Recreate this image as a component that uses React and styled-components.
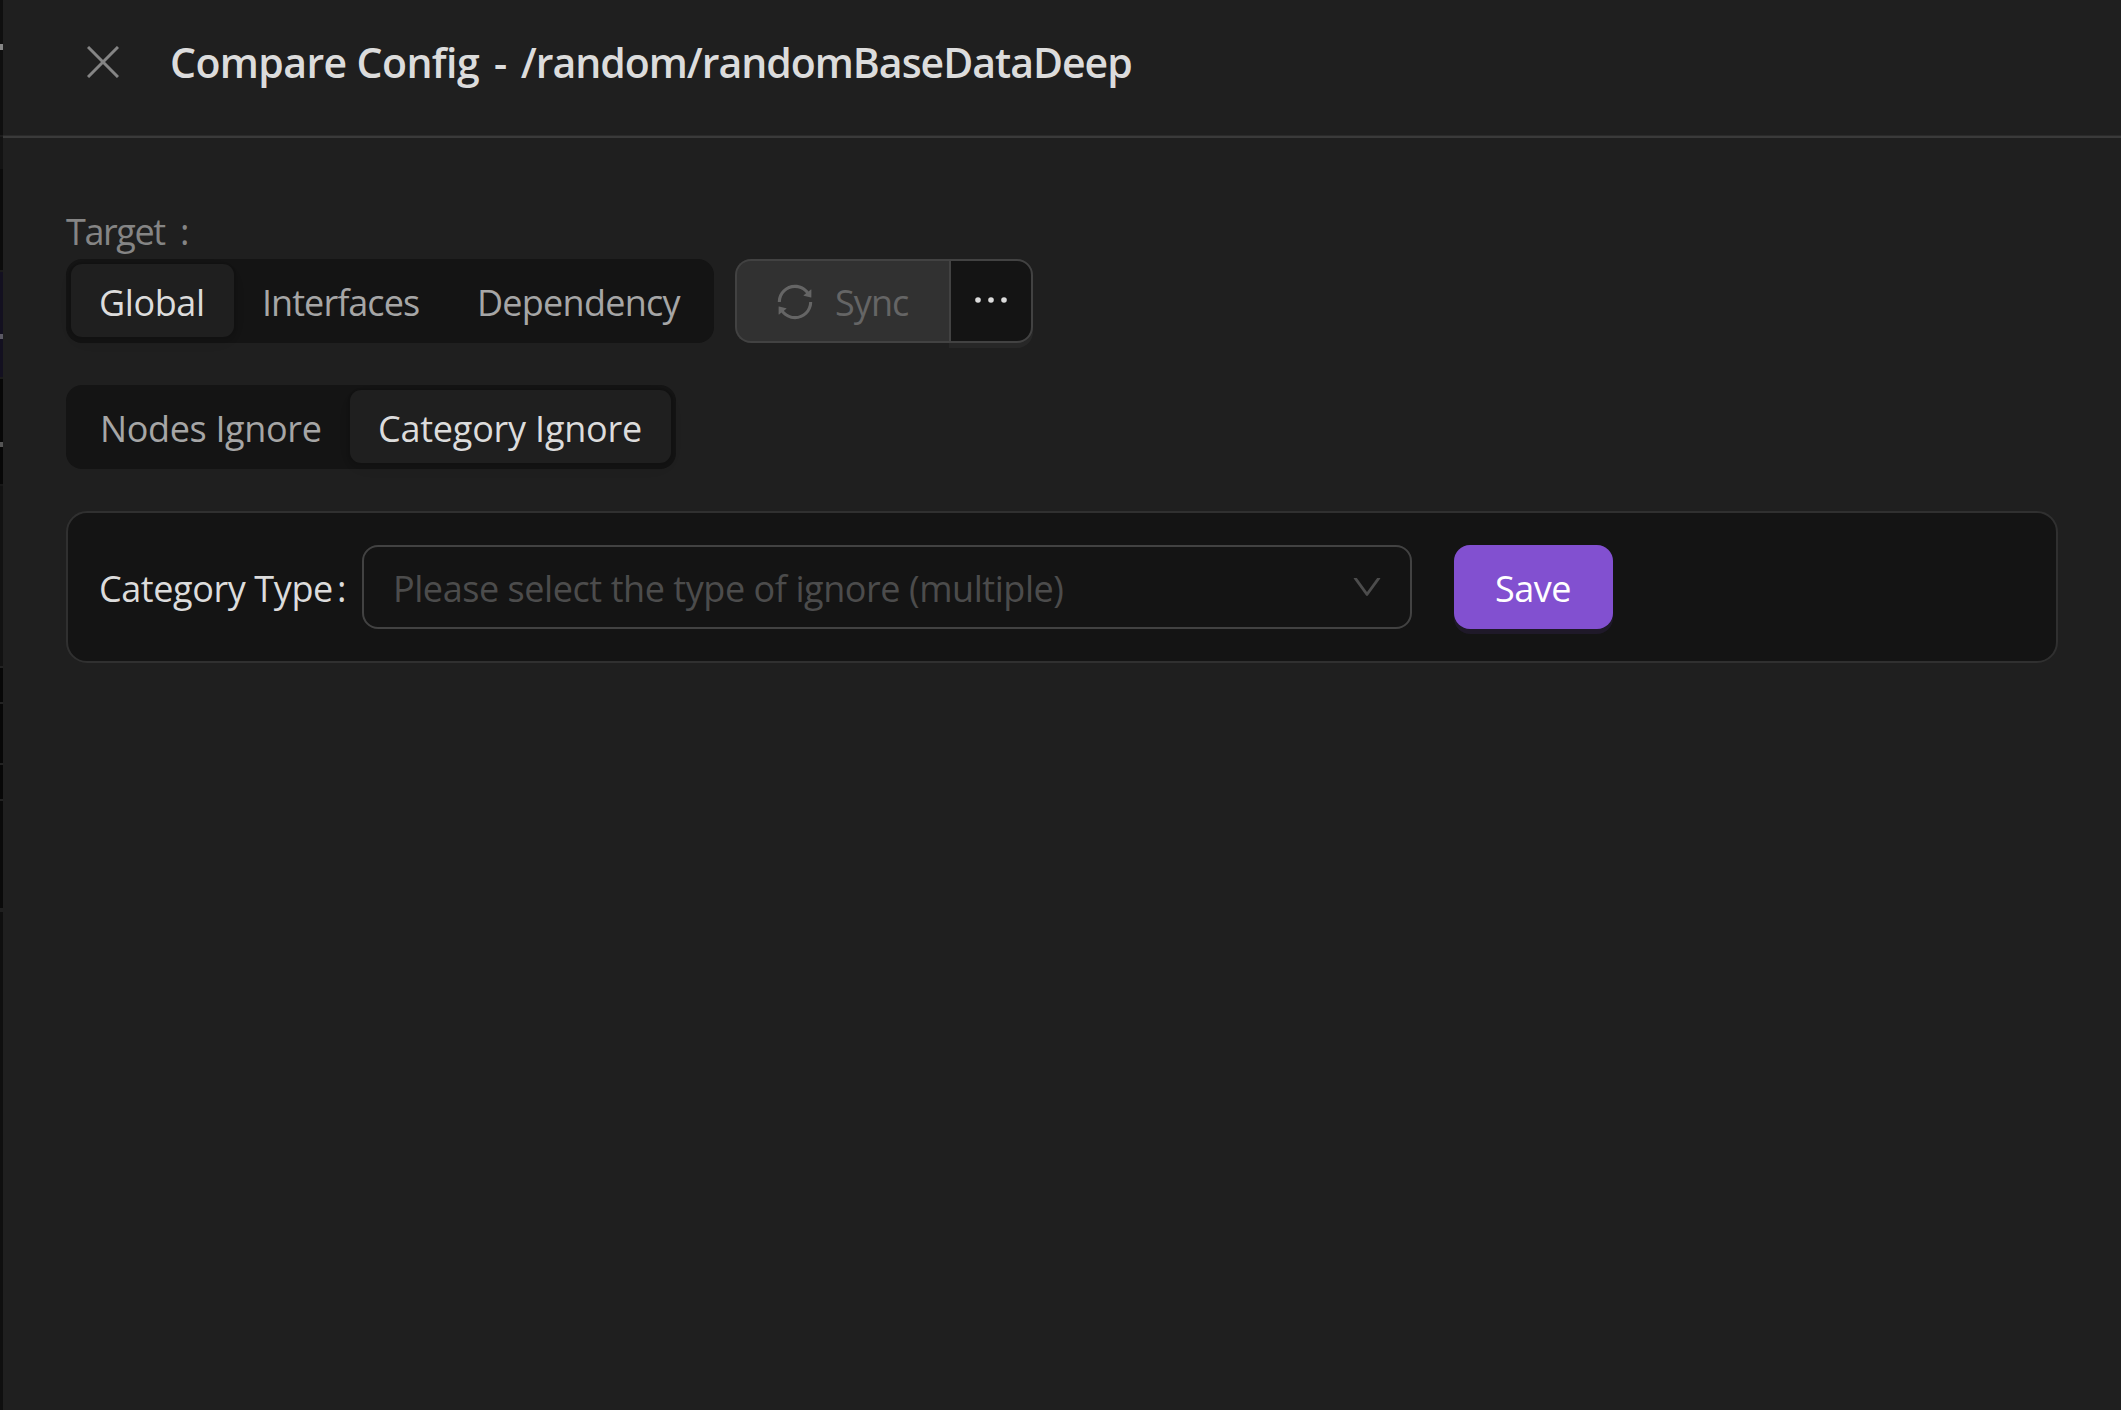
import React from 'react';
import styled, { createGlobalStyle } from 'styled-components';
import { AiOutlineSync, AiOutlineDown } from 'react-icons/ai';

const GlobalStyle = createGlobalStyle`
  *, *::before, *::after { box-sizing: border-box; }
  body {
    margin: 0;
    background: #1f1f1f;
    color: #dcdcdc;
    font-family: 'Open Sans', 'Noto Sans', sans-serif;
    font-size: 36px;
  }
  button { font: inherit; color: inherit; margin: 0; }
`;

const Page = styled.div`
  display: flex;
  height: 1410px;
  overflow: hidden;
`;

/* Sliver of the dimmed page that stays visible beside the drawer */
const Backdrop = styled.div`
  flex: none;
  width: 3px;
  display: flex;
  flex-direction: column;
`;
const Band = styled.div`
  flex: none;
  height: ${(p) => p.$h}px;
  background: ${(p) => p.$c};
`;

const Drawer = styled.section`
  flex: 1;
  background: #1f1f1f;
`;

const Header = styled.header`
  display: flex;
  align-items: center;
  height: 138px;
  padding: 0 0 12px 84px;
  border-bottom: 2px solid #3a3a3a;
  box-shadow: inset 0 -1px 0 #2a2a2a;
`;
const CloseButton = styled.button`
  display: flex;
  padding: 0;
  border: 0;
  background: none;
  color: #858585;
`;
const Title = styled.h1`
  margin: 0 0 0 51px;
  font-size: 41px;
  font-weight: 600;
  line-height: 56px;
  letter-spacing: -0.6px;
  white-space: nowrap;
`;
const Dash = styled.span`
  margin: 0 4px 0 5px;
`;
const Path = styled.span`
  letter-spacing: -1.02px;
`;

const Body = styled.main`
  padding: 65px 63px 0;
`;

const Word = styled.span`
  display: inline-block;
  width: ${(p) => (p.$w ? `${p.$w}px` : 'auto')};
  letter-spacing: ${(p) => p.$ls || 0}px;
  white-space: nowrap;
`;

const TargetLabel = styled.div`
  display: flex;
  height: 56px;
  line-height: 58px;
  color: #858585;
`;

const Row = styled.div`
  display: flex;
  gap: 21px;
  margin-bottom: 42px;
`;

const Segmented = styled.div`
  display: flex;
  height: 84px;
  padding: 5px 5px 6px;
  border-radius: 16px;
  background: #141414;
`;
const Segment = styled.button`
  width: ${(p) => p.$w}px;
  height: 73px;
  padding: 0 0 0 ${(p) => p.$pad || 28}px;
  border: 0;
  border-radius: 11px;
  text-align: left;
  line-height: 78px;
  background: ${(p) => (p.$on ? '#1f1f1f' : 'transparent')};
  color: ${(p) => (p.$on ? '#dcdcdc' : '#a6a6a6')};
  box-shadow: ${(p) =>
    p.$on
      ? '0 5px 21px -5px rgba(0,0,0,.05), 0 3px 10px -3px rgba(0,0,0,.07), 0 0 3px rgba(0,0,0,.08)'
      : 'none'};
`;

const ButtonGroup = styled.div`
  display: flex;
  height: 84px;
`;
const SyncButton = styled.button`
  display: flex;
  align-items: center;
  width: 214px;
  padding: 2px 0 0 37px;
  border: 2px solid #424242;
  border-right: 0;
  border-radius: 16px 0 0 16px;
  background: #313131;
  color: #656565;
  ${Word} { margin-left: 19px; }
`;
const MoreButton = styled.button`
  display: flex;
  align-items: center;
  justify-content: center;
  width: 84px;
  padding: 0 0 2px;
  border: 2px solid #424242;
  border-radius: 0 16px 16px 0;
  background: #141414;
  color: #dcdcdc;
  box-shadow: 0 5px 0 rgba(255, 255, 255, 0.04);
`;

const Card = styled.div`
  display: flex;
  height: 152px;
  padding: 32px 31px;
  border: 2px solid #303030;
  border-radius: 21px;
  background: #141414;
`;
const FieldLabel = styled.label`
  flex: none;
  width: 263px;
  line-height: 88px;
  display: flex;
`;
const Select = styled.div`
  display: flex;
  align-items: center;
  justify-content: space-between;
  flex: none;
  width: 1050px;
  height: 84px;
  padding: 0 25px 0 29px;
  border: 2px solid #424242;
  border-radius: 16px;
  color: #4c4c4c;
  line-height: 76px;
  ${Word} { padding-top: 4px; }
`;
const SaveButton = styled.button`
  width: 159px;
  height: 84px;
  margin-left: 42px;
  padding: 0 0 0 41px;
  border: 0;
  border-radius: 16px;
  background: #8250d0;
  color: #fff;
  text-align: left;
  line-height: 88px;
  box-shadow: 0 5px 0 #1f1929;
`;

const bands = [
  [44, '#0f0f0f'], [6, '#868686'], [85, '#0f0f0f'], [2, '#1c1c1c'], [32, '#131313'],
  [101, '#0b0b0b'], [2, '#1b1b1b'], [62, '#131020'], [5, '#5b5964'], [38, '#131020'],
  [2, '#1b1b1b'], [63, '#070707'], [5, '#555555'], [37, '#070707'], [2, '#181818'],
  [180, '#121212'], [2, '#222222'], [34, '#070707'], [2, '#222222'], [59, '#070707'],
  [2, '#222222'], [34, '#070707'], [2, '#222222'], [107, '#0a0a0a'], [4, '#1f1f1f'],
  [498, '#0f0f0f'],
];

const targets = [
  { label: 'Global', w: 163, ls: -0.4, on: true },
  { label: 'Interfaces', w: 214, ls: -0.95 },
  { label: 'Dependency', w: 261, ls: -0.75, pad: 29 },
];
const ignoreKinds = [
  { label: 'Nodes Ignore', w: 279, ls: -0.35, pad: 29 },
  { label: 'Category Ignore', w: 321, ls: -0.22, on: true },
];

const SegmentedControl = ({ options }) => (
  <Segmented>
    {options.map((o) => (
      <Segment key={o.label} $w={o.w} $on={o.on} $pad={o.pad}>
        <Word $ls={o.ls}>{o.label}</Word>
      </Segment>
    ))}
  </Segmented>
);

export default function App() {
  return (
    <Page>
      <GlobalStyle />
      <Backdrop>
        {bands.map(([h, c], i) => <Band key={i} $h={h} $c={c} />)}
      </Backdrop>
      <Drawer>
        <Header>
          <CloseButton aria-label="Close">
            <svg width="32" height="32" viewBox="0 0 32 32" fill="none" stroke="currentColor" strokeWidth="3">
              <path d="M1 1L31 31M31 1L1 31" />
            </svg>
          </CloseButton>
          <Title>
            Compare Config <Dash>-</Dash> <Path>/random/randomBaseDataDeep</Path>
          </Title>
        </Header>
        <Body>
          <TargetLabel>
            <Word $w={114} $ls={-1.4}>Target</Word>
            <Word>:</Word>
          </TargetLabel>
          <Row>
            <SegmentedControl options={targets} />
            <ButtonGroup>
              <SyncButton disabled>
                <AiOutlineSync size={42} />
                <Word $ls={-0.95}>Sync</Word>
              </SyncButton>
              <MoreButton aria-label="More">
                <svg width="34" height="8" viewBox="0 0 34 8" fill="currentColor">
                  <circle cx="4" cy="4" r="2.8" />
                  <circle cx="17" cy="4" r="2.8" />
                  <circle cx="30" cy="4" r="2.8" />
                </svg>
              </MoreButton>
            </ButtonGroup>
          </Row>
          <Row>
            <SegmentedControl options={ignoreKinds} />
          </Row>
          <Card>
            <FieldLabel>
              <Word $w={238} $ls={-0.41}>Category Type</Word>
              <Word>:</Word>
            </FieldLabel>
            <Select>
              <Word $ls={-0.44}>Please select the type of ignore (multiple)</Word>
              <AiOutlineDown size={36} />
            </Select>
            <SaveButton>
              <Word $ls={-0.5}>Save</Word>
            </SaveButton>
          </Card>
        </Body>
      </Drawer>
    </Page>
  );
}
